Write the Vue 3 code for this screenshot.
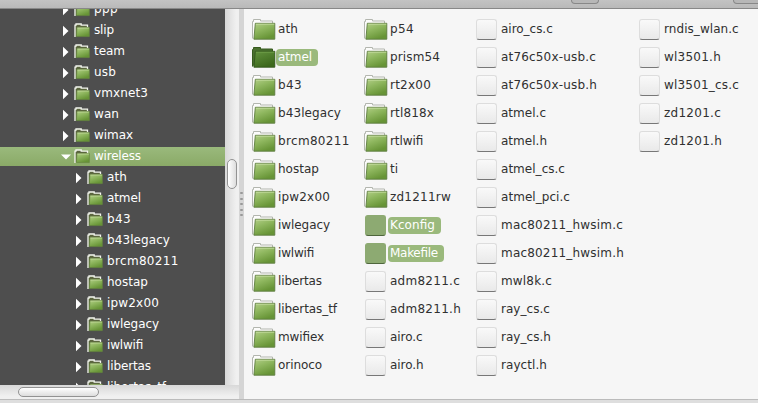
<script setup>
const dirs = (s) => s.split(' ').map((name) => ({ name, dir: true }))
const docs = (s) => s.split(' ').map((name) => ({ name }))
const columns = [
  { width: 112, items: dirs('ath atmel b43 b43legacy brcm80211 hostap ipw2x00 iwlegacy iwlwifi libertas libertas_tf mwifiex orinoco') },
  { width: 111, items: [...dirs('p54 prism54 rt2x00 rtl818x rtlwifi ti zd1211rw'), ...docs('Kconfig Makefile adm8211.c adm8211.h airo.c airo.h')] },
  { width: 163, items: docs('airo_cs.c at76c50x-usb.c at76c50x-usb.h atmel.c atmel.h atmel_cs.c atmel_pci.c mac80211_hwsim.c mac80211_hwsim.h mwl8k.c ray_cs.c ray_cs.h rayctl.h') },
  { width: 110, items: docs('rndis_wlan.c wl3501.h wl3501_cs.c zd1201.c zd1201.h') },
]
const selected = new Set(['atmel', 'Kconfig', 'Makefile'])
const tree = [
  ...'ppp slip team usb vmxnet3 wan wimax wireless'.split(' ').map((name) => ({ name, level: 0 })),
  ...'ath atmel b43 b43legacy brcm80211 hostap ipw2x00 iwlegacy iwlwifi libertas libertas_tf'.split(' ').map((name) => ({ name, level: 1 })),
]

// Glyph advances in em; names are spaced so each one has a whole-pixel width.
const advances = {
  a: 0.613, b: 0.635, c: 0.55, d: 0.635, e: 0.615, f: 0.352, g: 0.635, h: 0.634, i: 0.278, k: 0.579, l: 0.278,
  m: 0.974, n: 0.634, o: 0.612, p: 0.635, r: 0.411, s: 0.521, t: 0.392, u: 0.634, v: 0.592, w: 0.818, x: 0.592,
  y: 0.592, z: 0.525, '.': 0.318, _: 0.5, '-': 0.361, K: 0.656, M: 0.863,
}
const spacing = (name) => {
  let extra = 0
  for (const ch of name) {
    const w = (advances[ch] ?? 0.636) * 12
    extra += Math.round(w) - w
  }
  return { letterSpacing: (extra / name.length).toFixed(3) + 'px' }
}
</script>

<template>
  <div class="window">
    <svg width="0" height="0" class="defs">
      <defs>
        <linearGradient id="green" x1="0" y1="0" x2=".5" y2="1"><stop offset="0" stop-color="#b3cf88" /><stop offset=".45" stop-color="#8fb75f" /><stop offset="1" stop-color="#679436" /></linearGradient>
        <linearGradient id="dark" x1="0" y1="0" x2=".5" y2="1"><stop offset="0" stop-color="#64943f" /><stop offset="1" stop-color="#3c681c" /></linearGradient>
      </defs>
    </svg>
    <header class="toolbar"><i class="button first"></i><i class="button second"></i></header>
    <div class="body">
      <aside class="sidebar">
        <div class="top">
          <div class="tree">
            <div v-for="n in tree" :key="n.level + n.name" class="node" :class="{ nested: n.level, open: n.name === 'wireless' }">
              <svg class="arrow" width="10" height="12" viewBox="0 0 10 12">
                <path v-if="n.name === 'wireless'" d="M0 3.5h10L5 8.5z" fill="#fff" />
                <path v-else d="M2 .7l5.5 5.3L2 11.3z" fill="#fff" />
              </svg>
              <svg class="small" width="16" height="15" viewBox="0 0 16 15">
                <path d="M1 14V2.2h1V1h5.2v1.2h6.3V4" fill="#5b653f" stroke="#f5f7f0" stroke-width="1.3" />
                <path d="M3 4.4h12.4l-.1 9.2H2.4z" fill="url(#green)" stroke="#66863f" stroke-width=".7" />
                <path d="M3.4 5h11.5" stroke="#c8dca5" stroke-width=".7" />
              </svg>
              <span :style="spacing(n.name)">{{ n.name }}</span>
            </div>
          </div>
          <div class="vscroll"><i></i></div>
        </div>
        <div class="hscroll"><i></i></div>
      </aside>
      <div class="splitter"><i v-for="n in 5" :key="n"></i></div>
      <main class="files">
        <div v-for="(c, k) in columns" :key="k" class="column" :style="{ width: c.width + 'px' }">
          <div v-for="f in c.items" :key="f.name" class="file" :class="{ selected: selected.has(f.name) }">
            <svg v-if="f.dir" class="icon" width="25" height="22" viewBox="0 0 25 22">
              <path d="M1.5 20.5V3.5h1v-2h7v1.5h12v3" :fill="selected.has(f.name) ? '#4b7130' : '#fcfcfb'" :stroke="selected.has(f.name) ? '#375b1e' : '#b3b6af'" />
              <path d="M4.3 5.3h19.5v15.9H2.9z" :fill="selected.has(f.name) ? 'url(#dark)' : 'url(#green)'" :stroke="selected.has(f.name) ? '#31561b' : '#5e7d41'" stroke-width=".9" />
              <path d="M4.9 6.2h18.4" :stroke="selected.has(f.name) ? '#75a44f' : '#c9dfa5'" stroke-width=".8" />
            </svg>
            <i v-else class="doc"></i>
            <span class="label" :style="spacing(f.name)">{{ f.name }}</span>
          </div>
        </div>
      </main>
    </div>
    <footer class="status"></footer>
  </div>
</template>

<style>
body { overflow: hidden; }
</style>
<style scoped>
* { box-sizing: border-box; }
.window { width: 758px; height: 403px; display: flex; flex-direction: column; font: 12px/21px "DejaVu Sans", sans-serif; font-feature-settings: "liga" 1; background: #f6f6f6; overflow: hidden; }
.defs { position: absolute; }
.toolbar { height: 9px; flex: none; display: flex; background: linear-gradient(#c3c3c3, #b9b9b9); border-bottom: 1px solid #888; overflow: hidden; }
.button { flex: none; height: 4px; border: 1px solid #888; border-top: 0; border-radius: 0 0 4px 4px; background: #b7b7b7; }
.first { width: 28px; margin-left: 571px; }
.second { width: 40px; margin-left: 134px; }
.body { height: 390px; display: flex; }
.sidebar { width: 239px; }
.top { height: 376px; display: flex; }
.tree { width: 225px; overflow: hidden; background: #4e4e4e; color: #fff; }
.node { height: 21px; display: flex; align-items: center; padding-left: 61px; white-space: nowrap; }
.node:first-child { margin-top: -10px; }
.nested { padding-left: 74px; }
.open { background: linear-gradient(#9ab97c, #8aaa67); height: 19px; margin: 1px 0; }
.arrow { margin-right: 3px; flex: none; }
.small { margin-right: 4px; flex: none; }
.vscroll { width: 14px; background: linear-gradient(90deg, #d8d8d8, #f0f0f0 80%); padding: 150px 2px 0; }
.vscroll i { display: block; width: 10px; height: 30px; border: 1px solid #929292; border-radius: 5px; background: linear-gradient(90deg, #fff, #ddd); }
.hscroll { height: 14px; background: linear-gradient(#d8d8d8, #f0f0f0 80%); padding: 2px 18px; }
.hscroll i { display: block; width: 81px; height: 10px; border: 1px solid #929292; border-radius: 5px; background: linear-gradient(#fff, #ddd); }
.splitter { width: 5px; background: #d5d5d5; padding: 183px 1px 0; display: flex; flex-direction: column; gap: 3.5px; }
.splitter i { width: 3px; height: 2px; background: #999; border-radius: 1px; }
.files { flex: 1; display: flex; background: #f6f6f6; padding: 6px 0 0 7px; color: #303030; }
.column { flex: none; }
.file { height: 28px; display: flex; align-items: center; white-space: nowrap; }
.icon { width: 25px; flex: none; }
.doc { width: 21px; height: 21px; margin: 0 2px 0 2px; flex: none; border: 1px solid #ddd; border-bottom-color: #777; border-radius: 3px; background: linear-gradient(#f9f9f9, #e9e9e9); }
.label { height: 17px; line-height: 17px; border-radius: 4px; padding: 0 6px 0 2px; }
.selected .label { background: #9ab97c; color: #fff; }
.selected .doc { background: #8daa72; border-color: #8daa72; border-bottom-color: #4e663c; }
.status { height: 4px; background: #dedede; border-top: 1px solid #bbb; }
</style>
